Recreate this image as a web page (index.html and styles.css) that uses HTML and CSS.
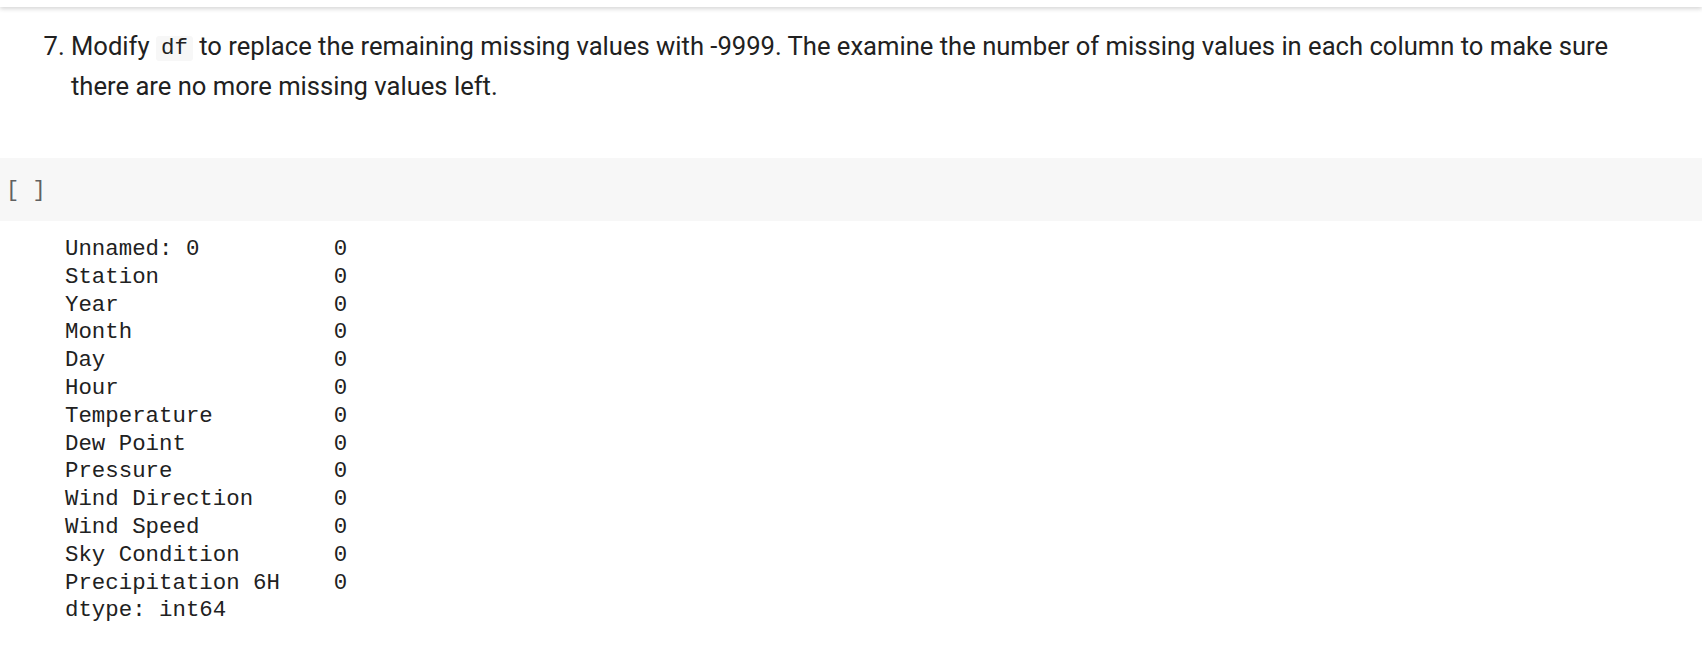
FILE: index.html
```html
<!DOCTYPE html>
<html>
<head>
<meta charset="utf-8">
<link rel="stylesheet" href="styles.css">
</head>
<body>
<div class="topbar"></div>
<div class="markdown">
  <ol class="steps" start="7">
    <li>Modify <code class="inline">df</code> to replace the remaining missing values with -9999. The examine the number of missing values in each column to make sure there are no more missing values left.</li>
  </ol>
</div>
<div class="cell">
  <div class="prompt">[ ]</div>
</div>
<div class="output">
<pre class="out">Unnamed: 0          0
Station             0
Year                0
Month               0
Day                 0
Hour                0
Temperature         0
Dew Point           0
Pressure            0
Wind Direction      0
Wind Speed          0
Sky Condition       0
Precipitation 6H    0
dtype: int64</pre>
</div>
</body>
</html>
```
FILE: styles.css
```css
html, body {
  margin: 0;
  padding: 0;
  background: #ffffff;
}
body {
  font-family: Roboto, "Noto Sans", sans-serif;
  color: #212121;
  width: 1702px;
  overflow: hidden;
}
.topbar {
  height: 7px;
  background: #ffffff;
  box-shadow: 0 2px 4px rgba(0, 0, 0, 0.16);
  position: relative;
}
.markdown {
  padding-top: 19px;
  height: 151px;
  box-sizing: border-box;
}
.steps {
  margin: 0;
  padding: 0 20px 0 71px;
  font-size: 25.6px;
  line-height: 40px;
  width: 1640px;
  box-sizing: border-box;
}
.inline {
  display: inline-block;
  font-family: "Liberation Mono", monospace;
  font-size: 22.4px;
  line-height: 25px;
  background: #f7f7f7;
  padding: 0 5px;
  border-radius: 3px;
  vertical-align: 1px;
}
.cell {
  background: #f7f7f7;
  height: 63px;
  display: flex;
  align-items: center;
}
.prompt {
  font-family: "Liberation Mono", monospace;
  font-size: 22px;
  color: #616161;
  padding-left: 6px;
  margin-top: 2px;
}
.output {
  padding: 15px 0 0 65px;
}
.out {
  margin: 0;
  font-family: "Liberation Mono", monospace;
  font-size: 22.4px;
  line-height: 27.8px;
  color: #212121;
}
```
